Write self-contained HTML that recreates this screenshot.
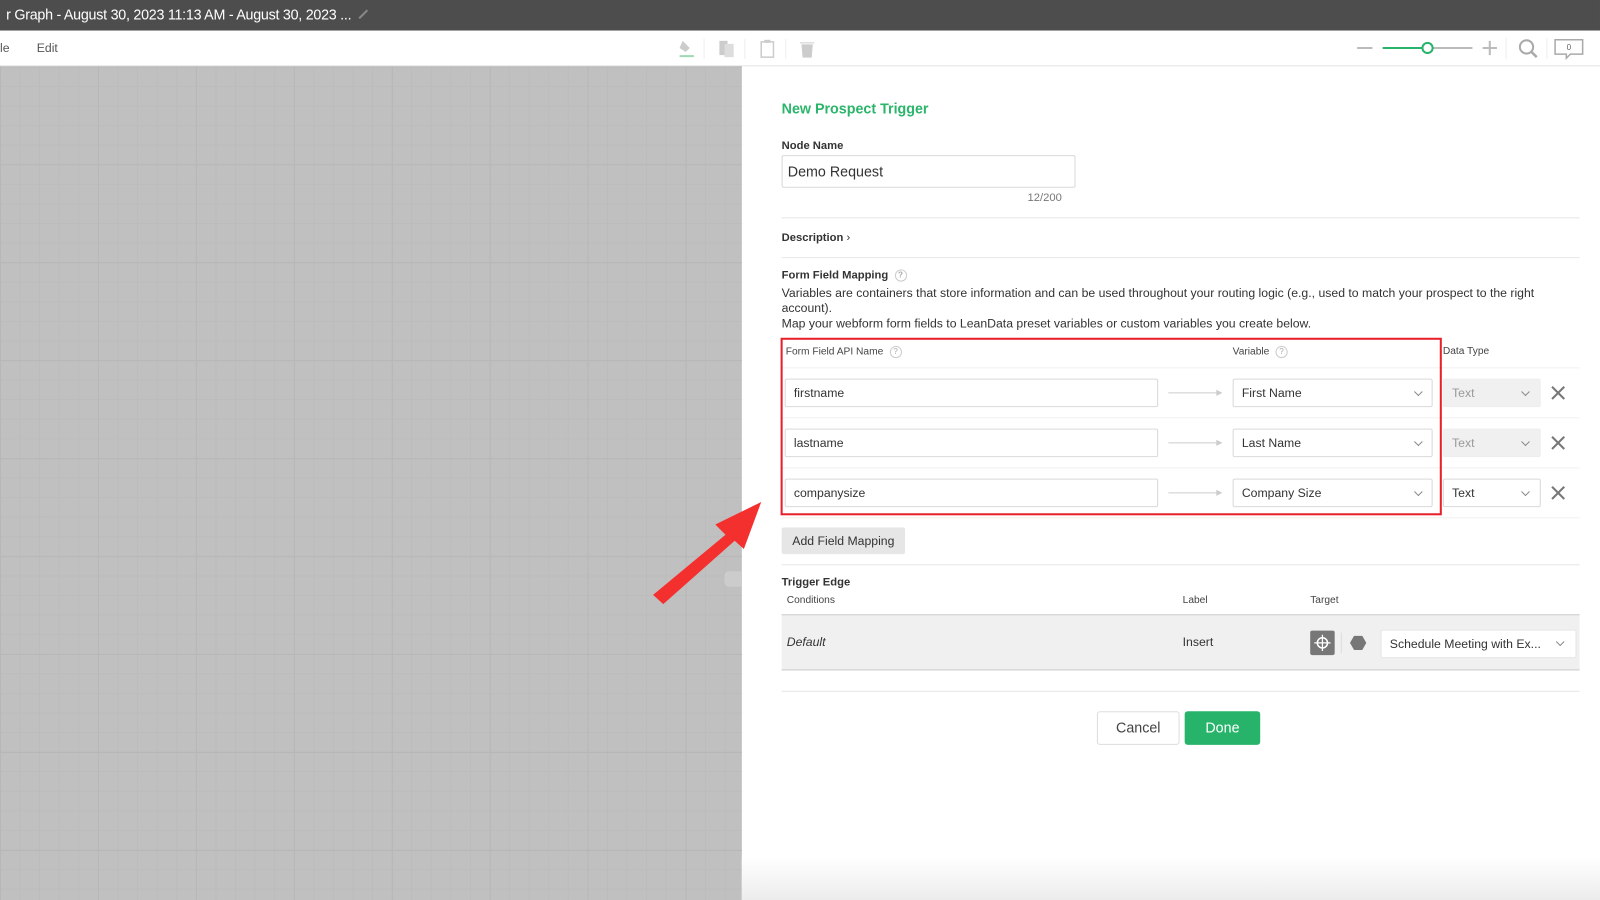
<!DOCTYPE html>
<html><head><meta charset="utf-8">
<style>
html,body{margin:0;padding:0;width:1600px;height:900px;overflow:hidden;background:#fff;}
#w{position:absolute;left:0;top:0;width:1568px;height:882px;transform:scale(1.0204);transform-origin:0 0;font-family:"Liberation Sans",sans-serif;color:#333;}
.a{position:absolute;white-space:nowrap;}
.t{font-size:11px;color:#333;}
.b{font-weight:bold;}
.hr{position:absolute;height:1px;background:#e6e6e6;}
.inp{position:absolute;border:1px solid #d9d9d9;border-radius:2px;background:#fff;box-sizing:border-box;font-size:12px;color:#333;padding-left:8px;}
.chev{position:absolute;width:5px;height:5px;border-right:1px solid #888;border-bottom:1px solid #888;transform:rotate(45deg);}
.q{display:inline-block;width:10px;height:10px;border:1px solid #ccc;border-radius:50%;font-size:8px;line-height:10px;text-align:center;color:#aaa;margin-left:6px;vertical-align:middle;}
</style></head><body><div id="w">
<div class="a" style="left:0;top:0;width:1568px;height:30px;background:#4d4d4d;"></div>
<div class="a" style="left:6px;top:6px;font-size:14px;color:#fff;letter-spacing:-0.25px;">r Graph - August 30, 2023 11:13 AM - August 30, 2023 ...</div>
<svg class="a" style="left:350px;top:8px" width="12" height="12"><path d="M2 10 L10 2" stroke="#888" stroke-width="2"/></svg>
<div class="a" style="left:0;top:30px;width:1568px;height:34px;background:#fff;border-bottom:1px solid #e3e3e3;"></div>
<div class="a" style="left:0;top:40px;font-size:12px;color:#555;">le</div>
<div class="a" style="left:36px;top:40px;font-size:12px;color:#555;">Edit</div>
<svg class="a" style="left:660px;top:36px" width="150" height="22">
<path d="M9 4 L16 11 L12 15 L6 11 Z" fill="#ccc"/><rect x="6" y="18" width="14" height="2" fill="#9ed9b5"/>
<line x1="30" y1="2" x2="30" y2="22" stroke="#eee"/>
<rect x="45" y="4" width="8" height="14" fill="#ccc"/><rect x="50" y="7" width="9" height="13" fill="#ddd"/>
<line x1="70" y1="2" x2="70" y2="22" stroke="#eee"/>
<rect x="86" y="5" width="12" height="15" fill="none" stroke="#ccc" stroke-width="1.5"/><rect x="89" y="3" width="6" height="3" fill="#ccc"/>
<line x1="110" y1="2" x2="110" y2="22" stroke="#eee"/>
<path d="M124 6 H138 M126 8 L127 20 H135 L136 8 Z" fill="#ccc" stroke="#ccc"/>
</svg>
<svg class="a" style="left:1325px;top:34px" width="240" height="28">
<line x1="5" y1="13" x2="20" y2="13" stroke="#bbb" stroke-width="2"/>
<line x1="30" y1="13" x2="70" y2="13" stroke="#27b46a" stroke-width="2"/>
<line x1="79" y1="13" x2="118" y2="13" stroke="#bbb" stroke-width="2"/>
<circle cx="74" cy="13" r="5" fill="#fff" stroke="#27b46a" stroke-width="2"/>
<path d="M135 6 V20 M128 13 H142" stroke="#bbb" stroke-width="2"/>
<line x1="151" y1="3" x2="151" y2="24" stroke="#eee"/>
<circle cx="171" cy="12" r="6.5" fill="none" stroke="#aaa" stroke-width="2"/><line x1="176" y1="17" x2="181" y2="22" stroke="#aaa" stroke-width="2.5"/>
<line x1="191" y1="3" x2="191" y2="24" stroke="#eee"/>
<path d="M199 5 H226 V19 H214 L210 23 V19 H199 Z" fill="#fff" stroke="#aaa" stroke-width="1.5"/>
<text x="212.5" y="15" font-size="8" text-anchor="middle" fill="#666" font-family="Liberation Sans">0</text>
</svg>
<div class="a" style="left:0;top:65px;width:727px;height:817px;background-color:#c0c0c0;background-image:linear-gradient(#b7b7b7 1px,transparent 1px),linear-gradient(90deg,#b7b7b7 1px,transparent 1px),linear-gradient(#bcbcbc 1px,transparent 1px),linear-gradient(90deg,#bcbcbc 1px,transparent 1px);background-size:96px 96px,96px 96px,19.2px 19.2px,19.2px 19.2px;"></div>
<div class="a" style="left:710px;top:560px;width:17px;height:15px;background:#ccc;border-radius:4px 0 0 4px;"></div>
<div class="a" style="left:727px;top:840px;width:841px;height:42px;background:linear-gradient(#fff,#ececec);"></div>

<div class="a b" style="left:766px;top:98px;font-size:14px;color:#2bb56b;">New Prospect Trigger</div>
<div class="a t b" style="left:766px;top:137px;">Node Name</div>
<div class="inp" style="left:766px;top:152px;width:288px;height:32px;font-size:14px;line-height:30px;padding-left:5px;">Demo Request</div>
<div class="a" style="left:1007px;top:188px;font-size:11px;color:#777;">12/200</div>
<div class="hr" style="left:766px;top:213px;width:782px;"></div>
<div class="a t b" style="left:766px;top:227px;">Description <span style="font-weight:normal">&#8250;</span></div>
<div class="hr" style="left:766px;top:252px;width:782px;"></div>
<div class="a t b" style="left:766px;top:264px;">Form Field Mapping<span class="q">?</span></div>
<div class="a" style="left:766px;top:280px;font-size:12px;line-height:15px;white-space:normal;width:770px;">Variables are containers that store information and can be used throughout your routing logic (e.g., used to match your prospect to the right account).<br>Map your webform form fields to LeanData preset variables or custom variables you create below.</div>

<div class="a" style="left:770px;top:339px;font-size:10px;color:#444;">Form Field API Name<span class="q">?</span></div>
<div class="a" style="left:1208px;top:339px;font-size:10px;color:#444;">Variable<span class="q">?</span></div>
<div class="a" style="left:1414px;top:339px;font-size:10px;color:#444;">Data Type</div>
<div class="hr" style="left:766px;top:360px;width:782px;background:#f0f0f0"></div>
<div class="hr" style="left:766px;top:409px;width:782px;background:#f0f0f0"></div>
<div class="hr" style="left:766px;top:458px;width:782px;background:#f0f0f0"></div>
<div class="hr" style="left:766px;top:507px;width:782px;background:#f0f0f0"></div>

<div class="inp" style="left:769px;top:371px;width:366px;height:28px;line-height:26px;">firstname</div>
<div class="inp" style="left:769px;top:420px;width:366px;height:28px;line-height:26px;">lastname</div>
<div class="inp" style="left:769px;top:469px;width:366px;height:28px;line-height:26px;">companysize</div>
<svg class="a" style="left:1144px;top:379px" width="56" height="110">
<g stroke="#ccc"><line x1="1" y1="6" x2="50" y2="6"/><line x1="1" y1="55" x2="50" y2="55"/><line x1="1" y1="104" x2="50" y2="104"/></g>
<g fill="#ccc"><path d="M48 3 L54 6 L48 9Z"/><path d="M48 52 L54 55 L48 58Z"/><path d="M48 101 L54 104 L48 107Z"/></g>
</svg>
<div class="inp" style="left:1208px;top:371px;width:196px;height:28px;line-height:26px;">First Name</div>
<div class="inp" style="left:1208px;top:420px;width:196px;height:28px;line-height:26px;">Last Name</div>
<div class="inp" style="left:1208px;top:469px;width:196px;height:28px;line-height:26px;">Company Size</div>
<div class="chev" style="left:1387px;top:381px"></div>
<div class="chev" style="left:1387px;top:430px"></div>
<div class="chev" style="left:1387px;top:479px"></div>
<div class="inp" style="left:1414px;top:371px;width:96px;height:28px;line-height:26px;background:#f0f0f0;border-color:#eee;color:#999;">Text</div>
<div class="inp" style="left:1414px;top:420px;width:96px;height:28px;line-height:26px;background:#f0f0f0;border-color:#eee;color:#999;">Text</div>
<div class="inp" style="left:1414px;top:469px;width:96px;height:28px;line-height:26px;">Text</div>
<div class="chev" style="left:1492px;top:381px"></div>
<div class="chev" style="left:1492px;top:430px"></div>
<div class="chev" style="left:1492px;top:479px"></div>
<svg class="a" style="left:1519px;top:377px" width="16" height="114">
<g stroke="#777" stroke-width="2"><path d="M2 2 L14 14 M14 2 L2 14"/><path d="M2 51 L14 63 M14 51 L2 63"/><path d="M2 100 L14 112 M14 100 L2 112"/></g>
</svg>
<div class="a" style="left:765px;top:331px;width:644px;height:170px;border:2.5px solid #e8202a;"></div>

<div class="a" style="left:766px;top:517px;width:121px;height:26px;background:#e6e6e6;border-radius:2px;font-size:12px;line-height:26px;text-align:center;color:#333;">Add Field Mapping</div>
<div class="hr" style="left:766px;top:553px;width:782px;"></div>
<div class="a t b" style="left:766px;top:565px;">Trigger Edge</div>
<div class="a" style="left:771px;top:583px;font-size:10px;color:#444;">Conditions</div>
<div class="a" style="left:1159px;top:583px;font-size:10px;color:#444;">Label</div>
<div class="a" style="left:1284px;top:583px;font-size:10px;color:#444;">Target</div>
<div class="a" style="left:766px;top:602px;width:782px;height:53px;background:#f0f0f0;border-top:1px solid #ccc;border-bottom:1px solid #ccc;"></div>
<div class="a" style="left:771px;top:622px;font-size:12px;font-style:italic;">Default</div>
<div class="a" style="left:1159px;top:622px;font-size:12px;">Insert</div>
<div class="a" style="left:1284px;top:618px;width:24px;height:24px;background:#777;border-radius:2px;"></div>
<svg class="a" style="left:1284px;top:618px" width="24" height="24"><circle cx="12" cy="12" r="5" fill="none" stroke="#fff" stroke-width="1.5"/><path d="M12 4 V20 M4 12 H20" stroke="#fff" stroke-width="1.2"/></svg>
<div class="a" style="left:1314px;top:620px;width:1px;height:20px;background:#ddd;"></div>
<svg class="a" style="left:1323px;top:623px" width="16" height="14"><path d="M4 0 H12 L16 7 L12 14 H4 L0 7 Z" fill="#777"/></svg>
<div class="inp" style="left:1353px;top:617px;width:192px;height:28px;line-height:26px;border-color:#e6e6e6;">Schedule Meeting with Ex...</div>
<div class="chev" style="left:1526px;top:626px"></div>
<div class="hr" style="left:766px;top:677px;width:782px;"></div>
<div class="a" style="left:1075px;top:697px;width:79px;height:31px;border:1px solid #ddd;border-radius:3px;font-size:14px;line-height:31px;text-align:center;color:#444;background:#fff;">Cancel</div>
<div class="a" style="left:1161px;top:697px;width:74px;height:33px;background:#27b46a;border-radius:3px;font-size:14px;line-height:33px;text-align:center;color:#fff;">Done</div>

<svg class="a" style="left:630px;top:480px" width="130" height="120">
<path d="M10 103 L81 44 L71 34 L116 12 L99 58 L90 50 L20 112 Z" fill="#f4302f"/>
</svg>
</div></body></html>
